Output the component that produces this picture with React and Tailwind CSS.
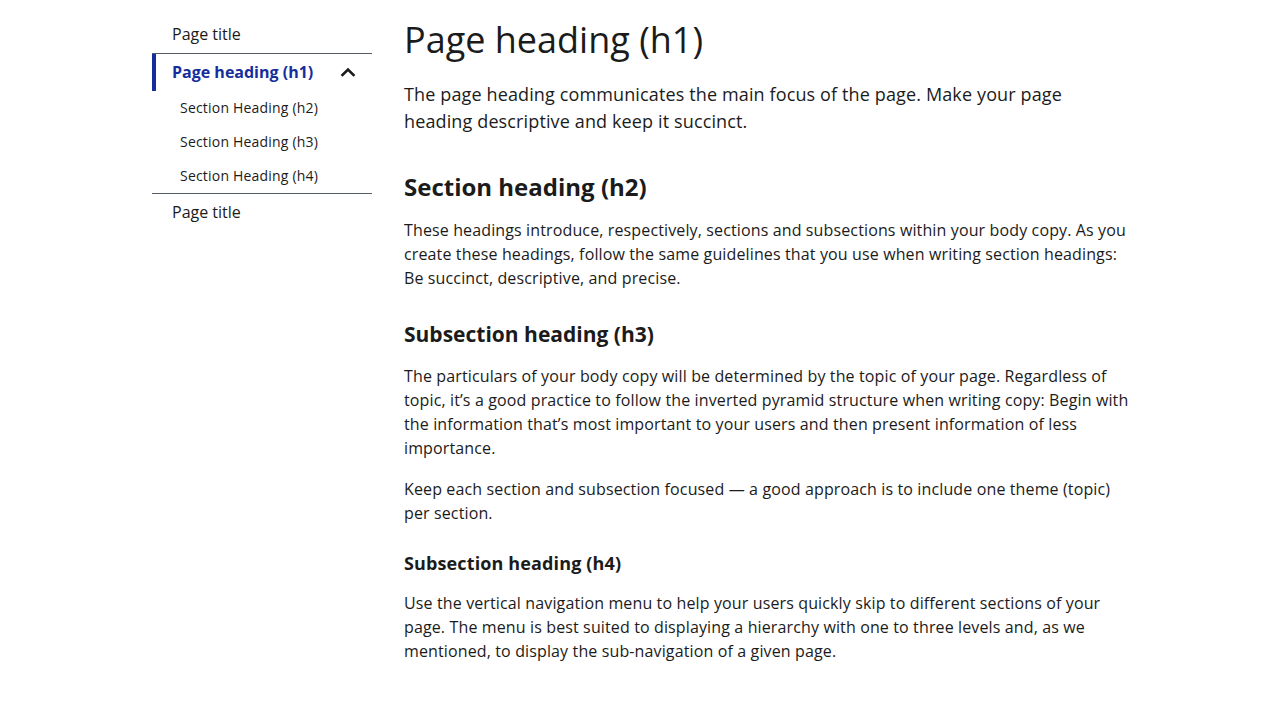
const subItems = ['Section Heading (h2)', 'Section Heading (h3)', 'Section Heading (h4)']

const ChevronUp = () => (
    <svg width="16" height="16" viewBox="0 0 16 16" fill="none" aria-hidden="true">
        <path d="M2.5 11 L8 5.5 L13.5 11" stroke="#1b1b1b" strokeWidth="2.6" strokeLinecap="square" />
    </svg>
)

const SideNav = () => {
    return (
        <nav className="w-[220px] shrink-0">
            <ul>
                <li className="border-b border-[#565c65]">
                    <a href="#" className="block pl-5 pr-4 py-[7px] text-base leading-6 text-[#1b1b1b]">
                        Page title
                    </a>
                </li>
                <li className="border-b border-[#565c65]">
                    <a href="#" className="flex items-center justify-between border-l-4 border-[#162e9c] pl-4 pr-4 pt-[6px] pb-[7px] text-base leading-6 font-bold text-[#162e9c]">
                        <span>Page heading (h1)</span>
                        <ChevronUp />
                    </a>
                    <ul>
                        {subItems.map((label) => (
                            <li key={label}>
                                <a href="#" className="block pl-7 pr-4 py-[7px] text-sm leading-5 tracking-[0.2px] text-[#1b1b1b]">
                                    {label}
                                </a>
                            </li>
                        ))}
                    </ul>
                </li>
                <li>
                    <a href="#" className="block pl-5 pr-4 py-[6px] text-base leading-6 text-[#1b1b1b]">
                        Page title
                    </a>
                </li>
            </ul>
        </nav>
    )
}

const App = () => {
    return (
        <div className="min-h-screen bg-white text-[#1b1b1b] font-['Open_Sans',sans-serif]">
            <div className="w-full pl-[152px] pr-[148px] pt-[15px] pb-16 flex gap-8">
                <SideNav />

                <main className="flex-1 tracking-[0.13px]">
                    <h1 className="mt-[3px] text-[36px] leading-[1.2] font-normal tracking-normal">Page heading (h1)</h1>
                    <p className="mt-[20px] text-lg leading-[27px]">
                        The page heading communicates the main focus of the page. Make your page heading descriptive and keep it succinct.
                    </p>

                    <h2 className="mt-[36px] text-2xl leading-[31px] font-bold tracking-normal">Section heading (h2)</h2>
                    <p className="mt-4 text-base leading-6">
                        These headings introduce, respectively, sections and subsections within your body copy. As you create these headings, follow the same guidelines that you use when writing section headings: Be succinct, descriptive, and precise.
                    </p>

                    <h3 className="mt-[31px] text-[21px] leading-[27px] font-bold tracking-normal">Subsection heading (h3)</h3>
                    <p className="mt-[16px] text-base leading-6">
                        The particulars of your body copy will be determined by the topic of your page. Regardless of topic, it’s a good practice to follow the inverted pyramid structure when writing copy: Begin with the information that’s most important to your users and then present information of less importance.
                    </p>
                    <p className="mt-[17px] text-base leading-6">
                        Keep each section and subsection focused — a good approach is to include one theme (topic) per section.
                    </p>

                    <h4 className="mt-[27px] text-lg leading-[23px] font-bold">Subsection heading (h4)</h4>
                    <p className="mt-4 text-base leading-6">
                        Use the vertical navigation menu to help your users quickly skip to different sections of your page. The menu is best suited to displaying a hierarchy with one to three levels and, as we mentioned, to display the sub-navigation of a given page.
                    </p>
                </main>
            </div>
        </div>
    )
}

export default App
